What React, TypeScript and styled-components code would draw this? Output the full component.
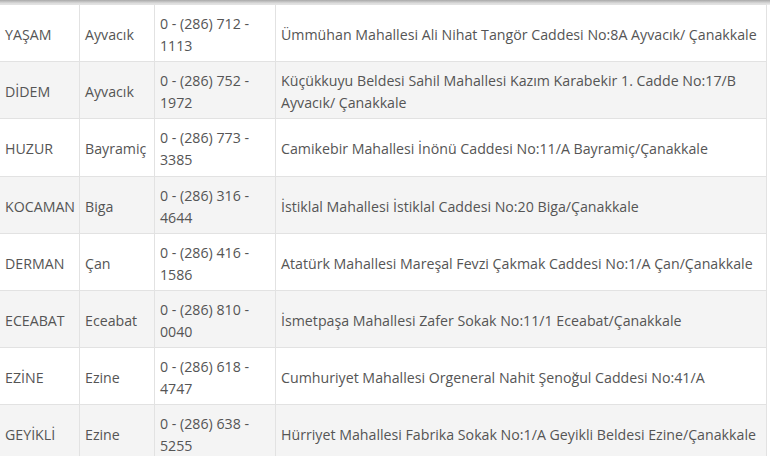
import React from "react";
import styled, { createGlobalStyle } from "styled-components";

const Global = createGlobalStyle`
  html, body { margin: 0; padding: 0; background: #fff; }
  body { font-family: "Open Sans", "Noto Sans", sans-serif; overflow: hidden; }
`;

const Page = styled.div`
  width: 770px;
  height: 456px;
  overflow: hidden;
  background: #fff;
  display: flex;
  flex-direction: column;
`;

const Shade = styled.div`
  height: 5px;
  flex: none;
  background: linear-gradient(#a9a9a9, #d8d8d8 60%, #eeeeee);
`;

const Table = styled.table`
  border-collapse: collapse;
  table-layout: fixed;
  width: 768px;
  margin-left: -1px;
  margin-top: -1px;
  font-size: 14.2px;
  line-height: 22px;
  color: #555;
`;

const Col = styled.col<{ $w?: number }>`
  width: ${(p) => (p.$w ? `${p.$w}px` : "auto")};
`;

const Row = styled.tr<{ $alt: boolean }>`
  background: ${(p) => (p.$alt ? "#f4f4f4" : "#fff")};
  height: 57.2px;
`;

const Cell = styled.td`
  border: 1px solid #e2e2e2;
  padding: 7px 5px 3px 5px;
  vertical-align: middle;
`;

const rows = [
  ["YAŞAM", "Ayvacık", "0 - (286) 712 - 1113", "Ümmühan Mahallesi Ali Nihat Tangör Caddesi No:8A Ayvacık/ Çanakkale"],
  ["DİDEM", "Ayvacık", "0 - (286) 752 - 1972", "Küçükkuyu Beldesi Sahil Mahallesi Kazım Karabekir 1. Cadde No:17/B Ayvacık/ Çanakkale"],
  ["HUZUR", "Bayramiç", "0 - (286) 773 - 3385", "Camikebir Mahallesi İnönü Caddesi No:11/A Bayramiç/Çanakkale"],
  ["KOCAMAN", "Biga", "0 - (286) 316 - 4644", "İstiklal Mahallesi İstiklal Caddesi No:20 Biga/Çanakkale"],
  ["DERMAN", "Çan", "0 - (286) 416 - 1586", "Atatürk Mahallesi Mareşal Fevzi Çakmak Caddesi No:1/A Çan/Çanakkale"],
  ["ECEABAT", "Eceabat", "0 - (286) 810 - 0040", "İsmetpaşa Mahallesi Zafer Sokak No:11/1 Eceabat/Çanakkale"],
  ["EZİNE", "Ezine", "0 - (286) 618 - 4747", "Cumhuriyet Mahallesi Orgeneral Nahit Şenoğul Caddesi No:41/A"],
  ["GEYİKLİ", "Ezine", "0 - (286) 638 - 5255", "Hürriyet Mahallesi Fabrika Sokak No:1/A Geyikli Beldesi Ezine/Çanakkale"],
];

export default function App() {
  return (
    <Page>
      <Global />
      <Shade />
      <Table>
        <colgroup>
          <Col $w={80} />
          <Col $w={75} />
          <Col $w={121} />
          <Col />
        </colgroup>
        <tbody>
          {rows.map((r, i) => (
            <Row key={i} $alt={i % 2 === 1}>
              {r.map((c, j) => (
                <Cell key={j}>{c}</Cell>
              ))}
            </Row>
          ))}
        </tbody>
      </Table>
    </Page>
  );
}
